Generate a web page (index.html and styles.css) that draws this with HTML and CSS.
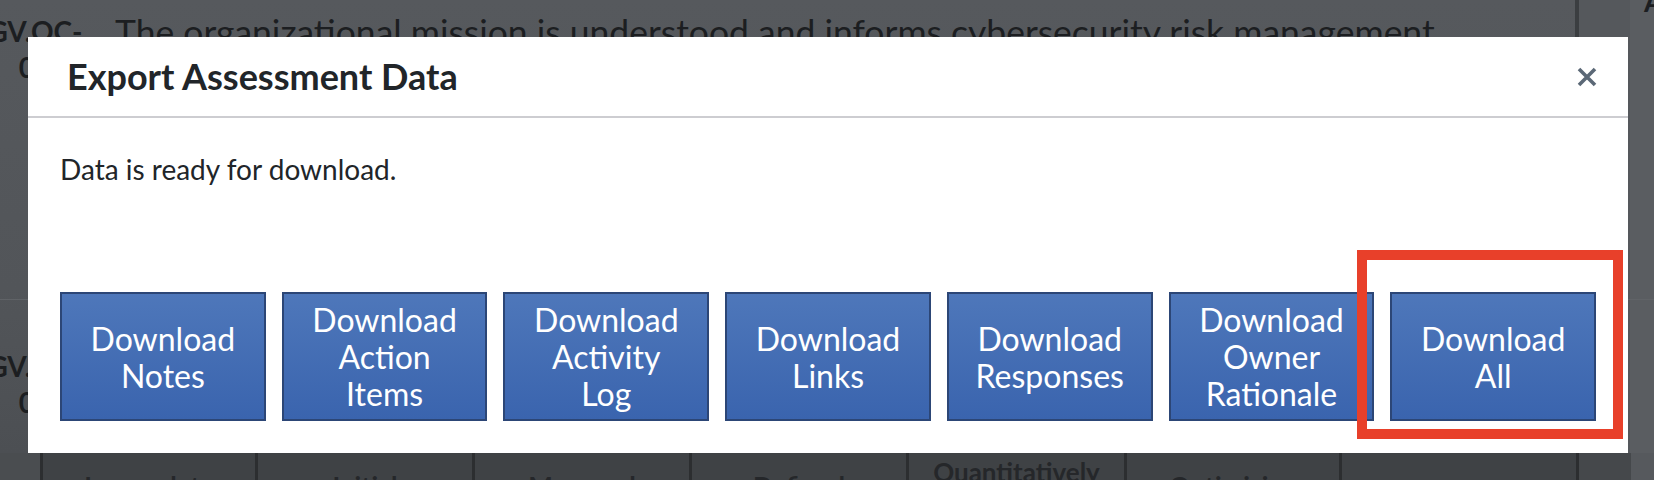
FILE: index.html
```html
<!DOCTYPE html>
<html lang="en">
<head>
<meta charset="utf-8">
<title>Export Assessment Data</title>
<link rel="stylesheet" href="styles.css">
</head>
<body>
<div class="page">
  <div class="table">
    <div class="row row-first">
      <div class="id-cell">GV.OC-<br>01</div>
      <div class="desc-cell">The organizational mission is understood and informs cybersecurity risk management</div>
      <div class="side-cell"></div>
      <div class="far-cell"><span class="far-label">A</span></div>
    </div>
    <div class="row row-second">
      <div class="id-cell id-cell-2">GV.OC-<br>02</div>
      <div class="desc-cell"></div>
      <div class="side-cell"></div>
      <div class="far-cell"></div>
    </div>
    <div class="levels">
      <div class="level level-lead"></div>
      <div class="level">Incomplete</div>
      <div class="level">Initial</div>
      <div class="level">Managed</div>
      <div class="level">Defined</div>
      <div class="level">Quantitatively Managed</div>
      <div class="level">Optimizing</div>
      <div class="level"></div>
      <div class="level level-side"></div>
      <div class="level level-far"></div>
    </div>
  </div>

  <div class="modal" role="dialog" aria-labelledby="modal-title">
    <div class="modal-header">
      <h2 class="modal-title" id="modal-title">Export Assessment Data</h2>
      <button class="close-btn" aria-label="Close">
        <svg class="close-icon" viewBox="0 0 20 20" width="20" height="20" aria-hidden="true">
          <path d="M2 2 L18 18 M18 2 L2 18" />
        </svg>
      </button>
    </div>
    <div class="modal-body">
      <p class="ready-text">Data is ready for download.</p>
      <div class="download-row">
        <button class="download-btn">Download Notes</button>
        <button class="download-btn">Download Action Items</button>
        <button class="download-btn">Download Activity Log</button>
        <button class="download-btn">Download Links</button>
        <button class="download-btn">Download Responses</button>
        <button class="download-btn">Download Owner Rationale</button>
        <button class="download-btn">Download All</button>
      </div>
    </div>
  </div>

  <div class="callout"></div>
</div>
</body>
</html>
```

FILE: styles.css
```css
* {
  box-sizing: border-box;
}

html, body {
  margin: 0;
  padding: 0;
}

body {
  font-family: Lato, "Liberation Sans", sans-serif;
  background: #53565a;
  width: 1654px;
  height: 480px;
  overflow: hidden;
}

.page {
  position: relative;
  width: 1654px;
  height: 480px;
  overflow: hidden;
  background: linear-gradient(180deg, #56595d 0%, #525559 60%, #4b4e52 100%);
}

/* ---------- background table (under the backdrop) ---------- */
.table {
  display: flex;
  flex-direction: column;
  width: 1654px;
  color: #1c1e21;
}

.row {
  display: flex;
}

.row-first {
  height: 299px;
}

.row-second {
  height: 154px;
  border-top: 1px solid #606367;
}

.id-cell {
  flex: 0 0 120px;
  margin-left: -25px;
  text-align: center;
  font-weight: 700;
  font-size: 28px;
  line-height: 36px;
  padding-top: 13px;
}

.id-cell-2 {
  padding-top: 48px;
}

.desc-cell {
  flex: 1 1 auto;
  padding-left: 20px;
  padding-top: 11px;
  font-size: 35.5px;
  line-height: 42px;
  white-space: nowrap;
  overflow: hidden;
}

.side-cell {
  flex: 0 0 55px;
  border-left: 4px solid #3b3e41;
  background: #55585c;
}

.far-cell {
  flex: 0 0 24px;
  background: #5a5d61;
  overflow: hidden;
}

.far-label {
  display: block;
  margin-top: -17px;
  padding-left: 14px;
  font-weight: 700;
  font-size: 28px;
  line-height: 36px;
}

.levels {
  display: grid;
  grid-template-columns: 40px 215px 217px 217px 217px 218px 215px 237px 55px 1fr;
  height: 65px;
}

.level {
  display: flex;
  align-items: center;
  justify-content: center;
  text-align: center;
  background: #3f4245;
  border-left: 3px solid #2c2e30;
  font-weight: 700;
  font-size: 26px;
  line-height: 28px;
  color: #25272a;
  padding: 0 20px;
}

.level-lead {
  background: #4a4d50;
  border-left: none;
}

.level-side {
  background: #45484b;
}

.level-far {
  background: #56595d;
  border-left: none;
}

/* ---------- modal ---------- */
.modal {
  position: absolute;
  left: 28px;
  top: 37px;
  width: 1600px;
  background: #ffffff;
  color: #212529;
}

.modal-header {
  display: flex;
  align-items: center;
  justify-content: space-between;
  padding: 18px 31px 18px 39px;
  border-bottom: 2px solid #cdcdd1;
}

.modal-title {
  margin: 0;
  font-size: 36px;
  line-height: 43px;
  font-weight: 700;
  color: #212529;
}

.close-btn {
  display: flex;
  align-items: center;
  justify-content: center;
  width: 20px;
  height: 20px;
  padding: 0;
  border: none;
  background: transparent;
  cursor: pointer;
}

.close-icon path {
  stroke: #5b6876;
  stroke-width: 3.6;
  fill: none;
}

.modal-body {
  padding: 32px;
}

.ready-text {
  margin: 0;
  font-size: 28px;
  line-height: 38px;
}

.download-row {
  display: flex;
  gap: 16px;
  margin-top: 104px;
}

.download-btn {
  flex: 1 1 0;
  height: 129px;
  display: flex;
  align-items: center;
  justify-content: center;
  padding: 0 20px;
  font-family: Lato, "Liberation Sans", sans-serif;
  font-size: 32px;
  line-height: 37px;
  color: #ffffff;
  text-align: center;
  background: linear-gradient(180deg, #4e77ba 0%, #3a64ae 100%);
  border: 2px solid #2c4676;
  border-radius: 0;
  cursor: pointer;
}

/* ---------- annotation ---------- */
.callout {
  position: absolute;
  left: 1357px;
  top: 250px;
  width: 266px;
  height: 189px;
  border: 10px solid #e8402a;
}
```
